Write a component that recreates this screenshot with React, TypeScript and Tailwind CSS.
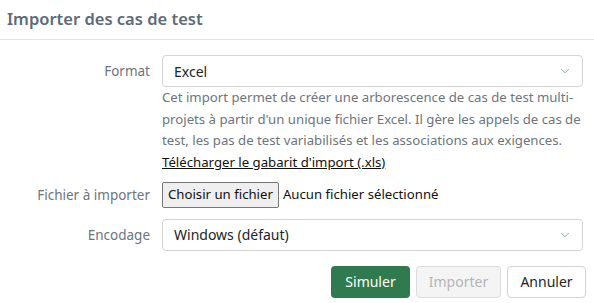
import { ChevronDown } from 'lucide-react'

function SelectBox({ value }: { value: string }) {
  return (
    <div className="flex h-[32px] items-center justify-between rounded-[4px] border border-[#d4d4d4] bg-white pl-[11px] pr-[10px] text-[14px] text-[#212529]">
      <span>{value}</span>
      <ChevronDown className="h-[14px] w-[14px] text-[#4a9a6a]" strokeWidth={1.3} />
    </div>
  )
}

export default function App() {
  return (
    <div className="h-[303px] w-[594px] bg-white font-['Noto_Sans','Open_Sans',sans-serif]">
      {/* Header */}
      <div className="flex h-[40px] items-center border-b border-[#e6e6e6] px-[7px]">
        <h1 className="text-[16.5px] font-semibold text-[#5d6a78]">Importer des cas de test</h1>
      </div>

      <div className="flex flex-col pt-[15px] pr-[11px]">
        {/* Format */}
        <div className="grid grid-cols-[150px_1fr] gap-x-[12px]">
          <label className="flex h-[32px] items-center justify-end text-[13.5px] text-[#6c757d]">Format</label>
          <div>
            <SelectBox value="Excel" />
            <p className="whitespace-nowrap text-[13.2px] leading-[21.7px] text-[#6c757d]">
              Cet import permet de créer une arborescence de cas de test multi-
              <br />
              projets à partir d'un unique fichier Excel. Il gère les appels de cas de
              <br />
              test, les pas de test variabilisés et les associations aux exigences.
              <br />
              <a href="#" className="text-[#111] underline">Télécharger le gabarit d'import (.xls)</a>
            </p>
          </div>
        </div>

        {/* Fichier */}
        <div className="mt-[8px] grid grid-cols-[150px_1fr] gap-x-[12px]">
          <label className="flex h-[26px] items-center justify-end text-[13.5px] text-[#6c757d]">Fichier à importer</label>
          <div className="flex items-center gap-[4px] text-[13.2px] text-[#111]">
            <button className="h-[26px] rounded-[2px] border border-[#767676] bg-[#efefef] px-[5px] text-[13.2px] text-[#111]">
              Choisir un fichier
            </button>
            <span>Aucun fichier sélectionné</span>
          </div>
        </div>

        {/* Encodage */}
        <div className="mt-[11px] grid grid-cols-[150px_1fr] gap-x-[12px]">
          <label className="flex h-[32px] items-center justify-end text-[13.5px] text-[#6c757d]">Encodage</label>
          <SelectBox value="Windows (défaut)" />
        </div>

        {/* Actions */}
        <div className="mt-[15px] mr-[-3px] flex justify-end gap-[6px]">
          <button className="h-[32px] w-[79px] rounded-[4px] bg-[#2f7a4f] text-[14px] text-white">Simuler</button>
          <button className="h-[32px] w-[85px] rounded-[4px] border border-[#dcdcdc] bg-[#f4f4f4] text-[14px] text-[#b4b4b4]">Importer</button>
          <button className="h-[32px] w-[79px] rounded-[4px] border border-[#d4d4d4] bg-white text-[14px] text-[#212529]">Annuler</button>
        </div>
      </div>
    </div>
  )
}
